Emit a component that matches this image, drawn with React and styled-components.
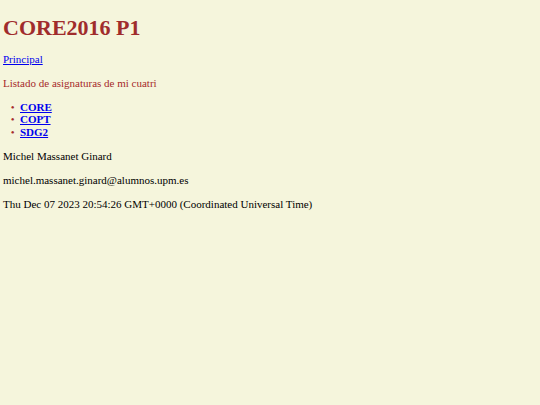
import React from 'react';
import styled, { createGlobalStyle } from 'styled-components';

const GlobalStyle = createGlobalStyle`
  html, body {
    background: #f5f5dc;
  }
  body {
    margin: 0;
    font-family: "Liberation Serif", "Times New Roman", serif;
    font-size: 11px;
    line-height: 12.5px;
    color: #000;
  }
`;

const Page = styled.div`
  padding: 0 3px;
`;

const Title = styled.h1`
  margin: 14.5px 0 13.25px;
  font-size: 22px;
  line-height: 25px;
  color: #a02c2c;
`;

const Para = styled.p`
  margin: 11.5px 0;
  color: ${props => (props.$accent ? '#a52a2a' : '#000')};
`;

const NavLink = styled.a`
  color: #0000ee;
  text-decoration: underline;
`;

const List = styled.ul`
  margin: 10.5px 0 11.5px;
  padding-left: 17px;
  color: #a52a2a;

  li {
    margin: 0;
  }

  li::marker {
    content: "\\2022\\2002";
    font-size: 11px;
  }
`;

const Subject = styled.a`
  color: #0000ee;
  font-weight: bold;
  text-decoration: underline;
`;

const subjects = ['CORE', 'COPT', 'SDG2'];

const App = () => {
  return (
    <Page>
      <GlobalStyle />
      <Title>CORE2016 P1</Title>
      <Para>
        <NavLink href="#">Principal</NavLink>
      </Para>
      <Para $accent>Listado de asignaturas de mi cuatri</Para>
      <List>
        {subjects.map(s => (
          <li key={s}>
            <Subject href="#">{s}</Subject>
          </li>
        ))}
      </List>
      <Para>Michel Massanet Ginard</Para>
      <Para>michel.massanet.ginard@alumnos.upm.es</Para>
      <Para>Thu Dec 07 2023 20:54:26 GMT+0000 (Coordinated Universal Time)</Para>
    </Page>
  );
};

export default App;
